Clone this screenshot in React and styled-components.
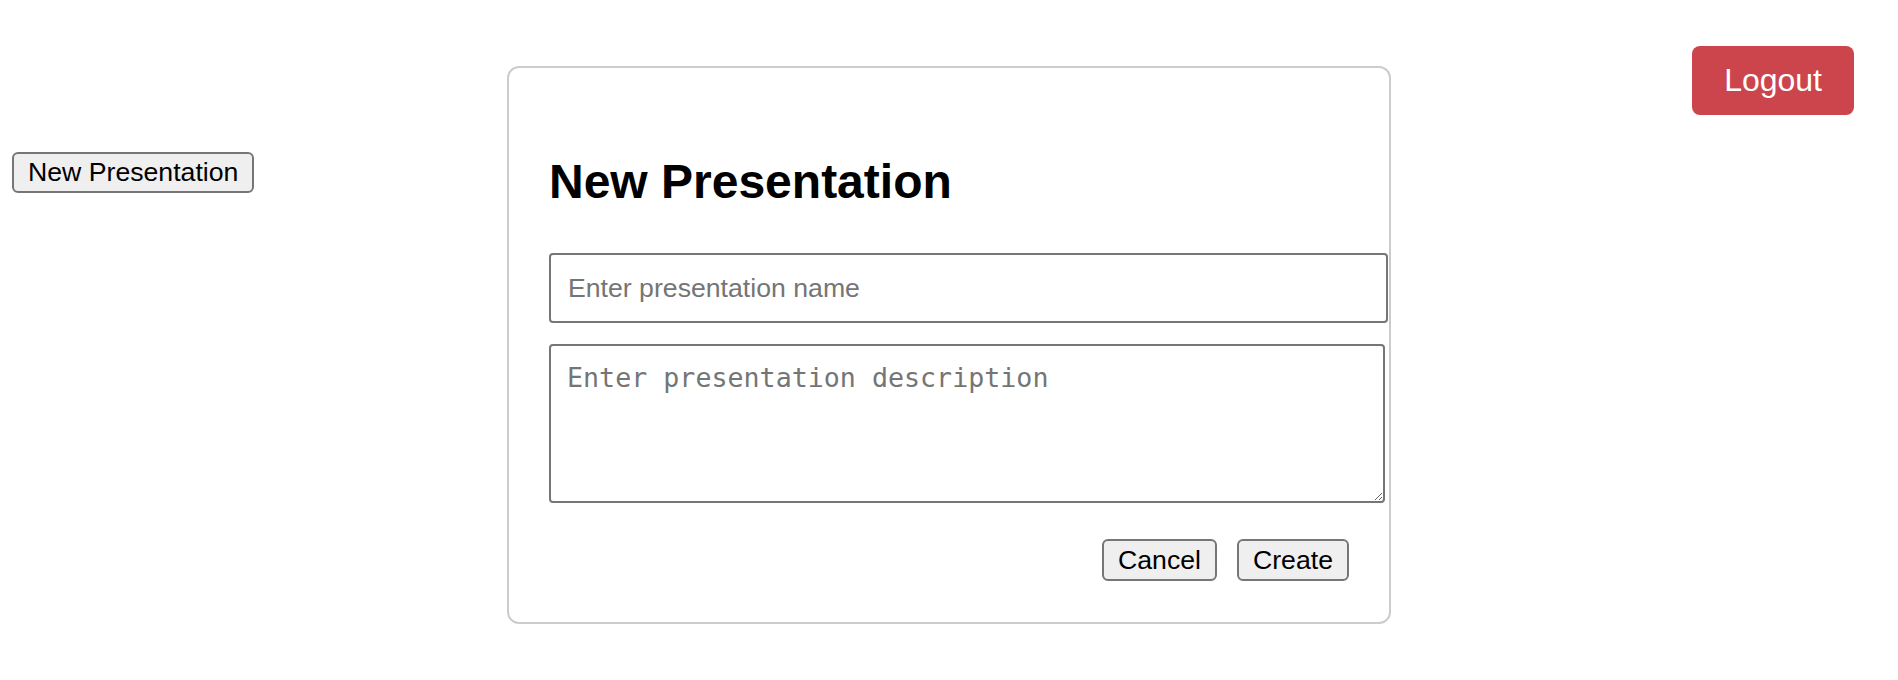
import React, { useState } from "react";
import styled, { createGlobalStyle } from "styled-components";

const GlobalStyle = createGlobalStyle`
  body {
    margin: 0;
    background: #ffffff;
    font-family: "Liberation Sans", Arial, sans-serif;
  }
`;

const Header = styled.header`
  display: flex;
  justify-content: flex-end;
  padding: 46px 44px 0;
`;

const LogoutButton = styled.button`
  background: #cc454d;
  color: #ffffff;
  border: none;
  border-radius: 8px;
  padding: 16px 32px;
  font-family: "Liberation Sans", Arial, sans-serif;
  font-size: 32px;
  line-height: 37px;
  cursor: pointer;
`;

const Toolbar = styled.div`
  display: flex;
  padding: 37px 12px;
`;

const PlainButton = styled.button`
  background: #efefef;
  color: #000000;
  border: 2px solid #767676;
  border-radius: 6px;
  padding: 3px 14px;
  font-family: "Liberation Sans", Arial, sans-serif;
  font-size: 26.67px;
  line-height: ${(p) => (p.$compact ? "31px" : "32px")};
  cursor: pointer;
`;

const Modal = styled.div`
  position: fixed;
  top: 66px;
  left: 50%;
  transform: translateX(-50%);
  width: 800px;
  padding: 40px 40px 41px;
  background: #ffffff;
  border: 2px solid #cccccc;
  border-radius: 12px;
`;

const Title = styled.h2`
  margin: 46px 0 43px;
  font-family: "Liberation Sans", Arial, sans-serif;
  font-size: 48px;
  line-height: 56px;
  font-weight: bold;
  color: #000000;
`;

const NameInput = styled.input`
  display: block;
  width: 100%;
  padding: 17px 18px 17px 17px;
  border: 2px solid #767676;
  border-radius: 4px;
  font-family: "Liberation Sans", Arial, sans-serif;
  font-size: 26.67px;
  line-height: 32px;
  color: #000000;
  &::placeholder {
    color: #757575;
  }
`;

const DescInput = styled.textarea`
  display: block;
  box-sizing: border-box;
  width: 836px;
  height: 159px;
  margin-top: 21px;
  padding: 16px;
  border: 2px solid #767676;
  border-radius: 4px;
  font-family: "DejaVu Sans Mono", "Liberation Mono", monospace;
  font-size: 26.67px;
  line-height: 31px;
  color: #000000;
  &::placeholder {
    color: #757575;
  }
`;

const Actions = styled.div`
  display: flex;
  justify-content: flex-end;
  gap: 20px;
  margin-top: 36px;
`;

export default function App() {
  const [name, setName] = useState("");
  const [desc, setDesc] = useState("");

  return (
    <>
      <GlobalStyle />
      <Header>
        <LogoutButton>Logout</LogoutButton>
      </Header>
      <Toolbar>
        <PlainButton $compact>New Presentation</PlainButton>
      </Toolbar>
      <Modal>
        <Title>New Presentation</Title>
        <NameInput
          placeholder="Enter presentation name"
          value={name}
          onChange={(e) => setName(e.target.value)}
        />
        <DescInput
          placeholder="Enter presentation description"
          value={desc}
          onChange={(e) => setDesc(e.target.value)}
        />
        <Actions>
          <PlainButton>Cancel</PlainButton>
          <PlainButton>Create</PlainButton>
        </Actions>
      </Modal>
    </>
  );
}
